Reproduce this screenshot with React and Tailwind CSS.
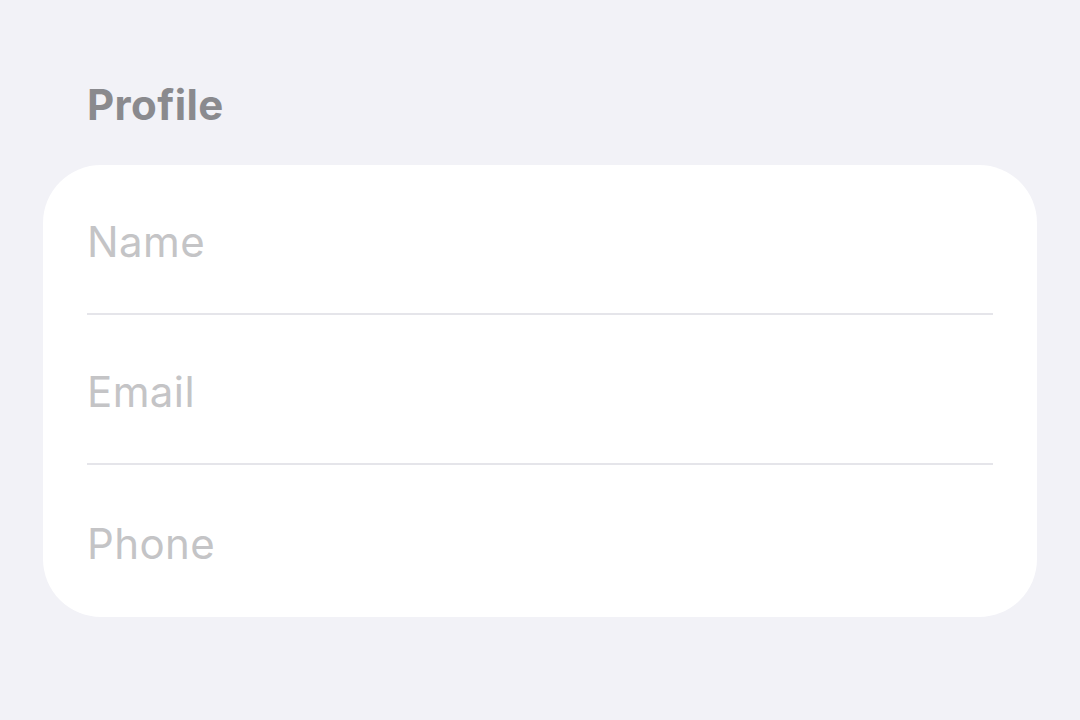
export default function App() {
  const rows = ["Name", "Email", "Phone"];
  return (
    <div className="w-[1080px] h-[720px] bg-[#f2f2f7] pt-[80px] px-[43px] font-['Inter','Noto_Sans',sans-serif]">
      <div className="pl-[44px] text-[42px] leading-[50px] font-bold text-[#8a8a8e] tracking-[0.4px]">Profile</div>
      <div className="mt-[35px] bg-white rounded-[58px] px-[44px]">
        {rows.map((r, i) => (
          <div key={r} className={`${i < rows.length - 1 ? "h-[150px] border-b-2 border-[#e5e5ea]" : "h-[152px]"} flex items-center`}>
            <span className="text-[42px] text-[#c4c4c6] tracking-[0.4px] pt-[5px]">{r}</span>
          </div>
        ))}
      </div>
    </div>
  );
}
